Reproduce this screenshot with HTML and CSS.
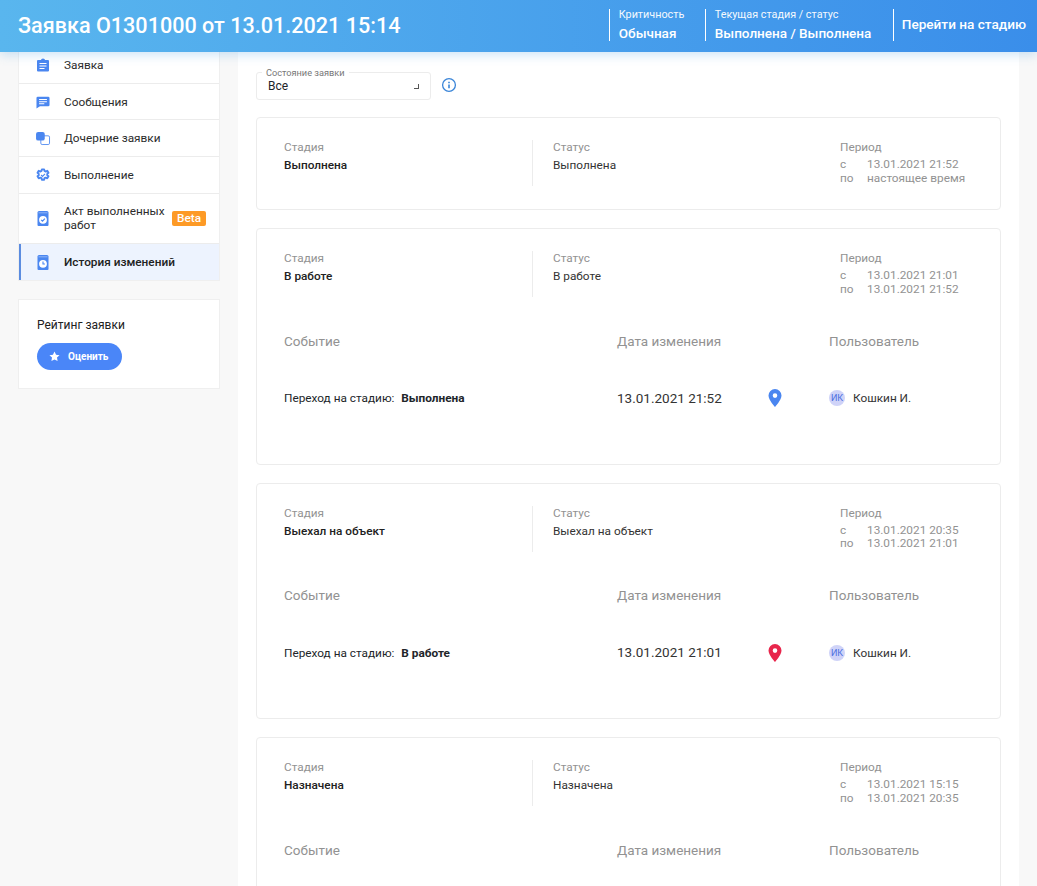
FILE: index.html
```html
<!DOCTYPE html>
<html lang="ru">
<head>
  <meta charset="UTF-8">
  <meta name="viewport" content="width=device-width, initial-scale=1.0">
  <title>Заявка О1301000</title>
  <link rel="stylesheet" href="styles.css">
</head>
<body>

<header class="topbar">
  <h1 class="topbar-title">Заявка О1301000 от 13.01.2021 15:14</h1>
  <div class="topbar-info topbar-crit">
    <span class="topbar-label">Критичность</span>
    <span class="topbar-value">Обычная</span>
  </div>
  <div class="topbar-info topbar-stage">
    <span class="topbar-label">Текущая стадия / статус</span>
    <span class="topbar-value">Выполнена / Выполнена</span>
  </div>
  <div class="topbar-info topbar-go"><span>Перейти на стадию</span></div>
</header>

<div class="page">
  <aside class="sidebar">
    <nav class="menu">
      <a class="menu-item">
        <svg class="menu-icon" viewBox="0 0 16 16"><path fill="#4a86f0" d="M3 3h3a2 1.500 0 0 1 4 0h3a1 1 0 0 1 1 1v9.500a1 1 0 0 1-1 1H3a1 1 0 0 1-1-1V4a1 1 0 0 1 1-1z"/><path fill="#fff" d="M4.500 6h7v1.100h-7zM4.500 8.500h7v1.100h-7zM4.500 11h5v1.100h-5z"/></svg>
        <span>Заявка</span>
      </a>
      <a class="menu-item">
        <svg class="menu-icon" viewBox="-1.200 -1.200 18.400 18.400"><path fill="#4a86f0" d="M2 2h12a1.500 1.500 0 0 1 1.500 1.500v8A1.500 1.500 0 0 1 14 13H4.500L.5 15.500V3.500A1.500 1.500 0 0 1 2 2z"/><path fill="#fff" d="M3.500 4.500h9v1.200h-9zM3.500 7h9v1.200h-9zM3.500 9.500h6v1.200h-6z"/></svg>
        <span>Сообщения</span>
      </a>
      <a class="menu-item">
        <svg class="menu-icon" viewBox="-1.200 -1.200 18.400 18.400"><rect x="5.500" y="5.500" width="10" height="10" rx="1.500" fill="#fff" stroke="#4a86f0"/><rect x="0" y="1" width="10" height="10" rx="2.500" fill="#4a86f0"/></svg>
        <span>Дочерние заявки</span>
      </a>
      <a class="menu-item">
        <svg class="menu-icon" viewBox="-1.200 -1.200 18.400 18.400"><path fill="none" stroke="#4a86f0" stroke-width="2.200" stroke-linejoin="round" d="M6.700 1.500h2.600l.4 1.800 1.500.7 1.700-.8 1.400 2.300-1.400 1.200v1.600l1.400 1.200-1.400 2.300-1.700-.8-1.500.7-.4 1.800H6.700l-.4-1.800-1.500-.7-1.700.8-1.400-2.300 1.400-1.200V6.700L1.700 5.500l1.400-2.300 1.700.8 1.500-.7z"/><path fill="none" stroke="#4a86f0" stroke-width="1.300" d="M5.800 8l1.600 1.600 2.900-3"/></svg>
        <span>Выполнение</span>
      </a>
      <a class="menu-item menu-item-beta">
        <svg class="menu-icon" viewBox="0 0 16 16"><path fill="#4a86f0" d="M4 1h8a1.500 1.500 0 0 1 1.500 1.500V15a1 1 0 0 1-1 1h-9a1 1 0 0 1-1-1V2.500A1.500 1.500 0 0 1 4 1z"/><path fill="#8fb4f6" d="M3.500 2.300h9v1h-9z"/><circle cx="8" cy="9.800" r="3.900" fill="#fff"/><path fill="none" stroke="#4a86f0" stroke-width="1.200" d="M6.200 9.800l1.300 1.300 2.400-2.500"/></svg>
        <span class="menu-text">Акт выполненных работ</span>
        <span class="badge">Beta</span>
      </a>
      <a class="menu-item menu-item-active">
        <svg class="menu-icon" viewBox="0 0 16 16"><path fill="#4a86f0" d="M4 1h8a1.500 1.500 0 0 1 1.500 1.500V15a1 1 0 0 1-1 1h-9a1 1 0 0 1-1-1V2.500A1.500 1.500 0 0 1 4 1z"/><path fill="#8fb4f6" d="M3.500 2.300h9v1h-9z"/><circle cx="8" cy="9.800" r="3.900" fill="#fff"/><path fill="none" stroke="#4a86f0" stroke-width="1.100" d="M8 7.600v2.400h1.900"/></svg>
        <span>История изменений</span>
      </a>
    </nav>

    <section class="rating">
      <div class="rating-title">Рейтинг заявки</div>
      <button class="rate-btn">
        <svg class="rate-star" viewBox="0 0 12 12"><path fill="#fff" d="M6 .6l1.700 3.500 3.800.5-2.800 2.600.7 3.800L6 9.200l-3.400 1.800.7-3.800L.5 4.600l3.800-.5z"/></svg>
        Оценить
      </button>
    </section>
  </aside>

  <main class="content">
    <div class="filter-row">
      <div class="select">
        <span class="select-label">Состояние заявки</span>
        <span class="select-value">Все</span>
        <span class="select-arrow"></span>
      </div>
      <svg class="info-icon" viewBox="0 0 16 16"><circle cx="8" cy="8" r="6.400" fill="none" stroke="#3a85d8" stroke-width="1.300"/><path fill="#3a85d8" d="M7.200 4.800h1.600v1.500H7.200zM7.200 7.400h1.600v3.800H7.200z"/></svg>
    </div>

    <section class="card card-short">
      <div class="card-head">
        <div class="col col-stage"><div class="muted">Стадия</div><div class="strong">Выполнена</div></div>
        <div class="col col-status"><div class="muted">Статус</div><div class="plain">Выполнена</div></div>
        <div class="col col-period">
          <div class="muted">Период</div>
          <div class="period-row"><span>с</span><span>13.01.2021 21:52</span></div>
          <div class="period-row"><span>по</span><span>настоящее время</span></div>
        </div>
      </div>
    </section>

    <section class="card">
      <div class="card-head">
        <div class="col col-stage"><div class="muted">Стадия</div><div class="strong">В работе</div></div>
        <div class="col col-status"><div class="muted">Статус</div><div class="plain">В работе</div></div>
        <div class="col col-period">
          <div class="muted">Период</div>
          <div class="period-row"><span>с</span><span>13.01.2021 21:01</span></div>
          <div class="period-row"><span>по</span><span>13.01.2021 21:52</span></div>
        </div>
      </div>
      <div class="events events-head">
        <div class="ev-name">Событие</div><div class="ev-date">Дата изменения</div><div class="ev-pin"></div><div class="ev-user">Пользователь</div>
      </div>
      <div class="events events-row">
        <div class="ev-name">Переход на стадию: <b>Выполнена</b></div>
        <div class="ev-date">13.01.2021 21:52</div>
        <div class="ev-pin"><svg class="pin" viewBox="0 0 14 18"><path fill="#4a86f0" fill-rule="evenodd" d="M7 0a6.500 6.500 0 0 1 6.500 6.500C13.500 11 7 18 7 18S.5 11 .5 6.500A6.500 6.500 0 0 1 7 0zm0 4.300a2.300 2.300 0 1 0 0 4.600 2.300 2.300 0 0 0 0-4.600z"/></svg></div>
        <div class="ev-user"><span class="avatar">ИК</span>Кошкин И.</div>
      </div>
    </section>

    <section class="card">
      <div class="card-head">
        <div class="col col-stage"><div class="muted">Стадия</div><div class="strong">Выехал на объект</div></div>
        <div class="col col-status"><div class="muted">Статус</div><div class="plain">Выехал на объект</div></div>
        <div class="col col-period">
          <div class="muted">Период</div>
          <div class="period-row"><span>с</span><span>13.01.2021 20:35</span></div>
          <div class="period-row"><span>по</span><span>13.01.2021 21:01</span></div>
        </div>
      </div>
      <div class="events events-head">
        <div class="ev-name">Событие</div><div class="ev-date">Дата изменения</div><div class="ev-pin"></div><div class="ev-user">Пользователь</div>
      </div>
      <div class="events events-row">
        <div class="ev-name">Переход на стадию: <b>В работе</b></div>
        <div class="ev-date">13.01.2021 21:01</div>
        <div class="ev-pin"><svg class="pin" viewBox="0 0 14 18"><path fill="#e8264c" fill-rule="evenodd" d="M7 0a6.500 6.500 0 0 1 6.500 6.500C13.500 11 7 18 7 18S.5 11 .5 6.500A6.500 6.500 0 0 1 7 0zm0 4.300a2.300 2.300 0 1 0 0 4.600 2.300 2.300 0 0 0 0-4.600z"/></svg></div>
        <div class="ev-user"><span class="avatar">ИК</span>Кошкин И.</div>
      </div>
    </section>

    <section class="card">
      <div class="card-head">
        <div class="col col-stage"><div class="muted">Стадия</div><div class="strong">Назначена</div></div>
        <div class="col col-status"><div class="muted">Статус</div><div class="plain">Назначена</div></div>
        <div class="col col-period">
          <div class="muted">Период</div>
          <div class="period-row"><span>с</span><span>13.01.2021 15:15</span></div>
          <div class="period-row"><span>по</span><span>13.01.2021 20:35</span></div>
        </div>
      </div>
      <div class="events events-head">
        <div class="ev-name">Событие</div><div class="ev-date">Дата изменения</div><div class="ev-pin"></div><div class="ev-user">Пользователь</div>
      </div>
    </section>
  </main>
</div>

</body>
</html>
```

FILE: styles.css
```css
* { box-sizing: border-box; }

html, body {
  height: 886px;
  overflow: hidden;
}
body {
  margin: 0;
  font-family: Roboto, "Noto Sans", sans-serif;
  font-size: 11.800px;
  color: #212529;
  background: #f8f8f8;
}

/* header */
.topbar {
  position: absolute;
  top: 0;
  left: 0;
  right: 0;
  z-index: 5;
  height: 52px;
  display: flex;
  align-items: center;
  padding: 9px 11px 11px 18px;
  color: #fff;
  background: linear-gradient(90deg, #59b6ee 0%, #3a8eea 100%);
  box-shadow: 0 3px 10px rgba(90, 170, 230, .3);
}
.topbar-title {
  flex: 1;
  margin: 0;
  font-size: 21.600px;
  font-weight: 500;
}
.topbar-info {
  height: 32px;
  border-left: 1px solid #fff;
  padding-left: 9px;
  display: flex;
  flex-direction: column;
  justify-content: space-between;
}
.topbar-crit { width: 96px; }
.topbar-stage { width: 188px; }
.topbar-go {
  font-size: 13.600px;
  font-weight: 500;
  padding-left: 8px;
  padding-top: 7px;
  justify-content: flex-start;
}
.topbar-label { font-size: 10.800px; line-height: 12px; opacity: .95; }
.topbar-value { font-size: 13.500px; line-height: 16px; font-weight: 500; }

/* layout */
.page {
  display: flex;
  align-items: flex-start;
  padding-left: 18px;
  padding-right: 18px;
  height: 886px;
}
.sidebar {
  width: 202px;
  margin-right: 18px;
  padding-top: 47px;
}
.content {
  flex: 1;
  height: 886px;
  background: #fff;
  padding: 72px 18px 0;
  overflow: hidden;
}

/* side menu */
.menu {
  background: #fff;
  border: 1px solid #efefef;
  border-top: 0;
}
.menu-item {
  display: flex;
  align-items: center;
  height: 36.700px;
  padding-left: 16px;
  border-bottom: 1px solid #ececec;
  color: #2b2b2b;
}
.menu-item:last-child { border-bottom: 0; }
.menu-item-beta { height: 50px; }
.menu-item-active {
  background: #edf3fe;
  box-shadow: inset 2px 0 0 #5b8ce0;
  color: #212121;
  font-weight: 500;
}
.menu-icon {
  width: 16px;
  height: 16px;
  flex: none;
  margin-right: 13px;
}
.menu-text { width: 108px; line-height: 14px; }
.badge {
  padding: 0 5px;
  height: 15px;
  line-height: 15px;
  border-radius: 2px;
  background: #fd9a26;
  color: #fff;
  font-weight: 500;
}

/* rating */
.rating {
  margin-top: 18px;
  height: 90px;
  padding: 18px 18px;
  background: #fff;
  border: 1px solid #efefef;
}
.rating-title { font-size: 12px; line-height: 14px; color: #212121; }
.rate-btn {
  display: flex;
  align-items: center;
  margin-top: 11px;
  width: 85px;
  height: 27px;
  padding: 0 0 0 12px;
  border: none;
  border-radius: 14px;
  background: #4a86f8;
  color: #fff;
  font-family: inherit;
  font-size: 10px;
  font-weight: 700;
}
.rate-star { width: 11px; height: 11px; margin-right: 8px; }

/* filter */
.filter-row {
  display: flex;
  align-items: center;
  gap: 10px;
  margin-bottom: 17px;
}
.select {
  position: relative;
  width: 175px;
  height: 28px;
  border: 1px solid #ececec;
  border-radius: 3px;
  padding: 6px 11px;
  font-size: 12px;
}
.select-label {
  position: absolute;
  top: -5px;
  left: 5px;
  padding: 0 4px;
  background: #fff;
  font-size: 9.200px;
  line-height: 10px;
  color: #777;
}
.select-value { line-height: 14px; display: block; }
.select-arrow {
  position: absolute;
  right: 11px;
  top: 11px;
  width: 5px;
  height: 5px;
  border-right: 1px solid #555;
  border-bottom: 1px solid #555;
}
.info-icon { width: 16px; height: 16px; margin-top: -2px; }

/* cards */
.card {
  height: 236.600px;
  margin-bottom: 18px;
  border: 1px solid #ececec;
  border-radius: 4px;
  padding: 22px 27px 0;
}
.card-short { height: 93px; }
.card-head {
  display: flex;
  line-height: 14px;
}
.col-stage {
  width: 249px;
  height: 46px;
  border-right: 1px solid #ececec;
}
.col-status {
  width: 307px;
  padding-left: 20px;
}
.col-period { flex: 1; }
.muted { color: #929292; margin-bottom: 4px; }
.strong { font-weight: 500; color: #212121; }
.plain { color: #333; }
.period-row {
  display: flex;
  color: #929292;
  line-height: 13.500px;
}
.period-row:first-of-type { margin-top: -1px; }
.period-row span:first-child { width: 27px; }

/* events */
.events {
  display: flex;
  align-items: center;
}
.events-head {
  margin-top: 35.500px;
  font-size: 13.500px;
  line-height: 17px;
  color: #929292;
}
.events-head .ev-user { color: #929292; }
.events-row { margin-top: 39.500px; }
.ev-name { width: 333px; }
.ev-name b { margin-left: 4px; font-weight: 700; }
.ev-date { width: 150px; font-size: 13.500px; line-height: 17px; }
.events-row .ev-date { color: #333; }
.ev-pin { width: 62px; display: flex; padding-left: 1px; }
.ev-user { display: flex; align-items: center; color: #333; }
.pin { width: 14px; height: 18px; }
.avatar {
  width: 16px;
  height: 16px;
  margin-right: 8px;
  border-radius: 50%;
  background: #cfd3f8;
  color: #4a6fe0;
  font-size: 9px;
  line-height: 16px;
  text-align: center;
}
```
